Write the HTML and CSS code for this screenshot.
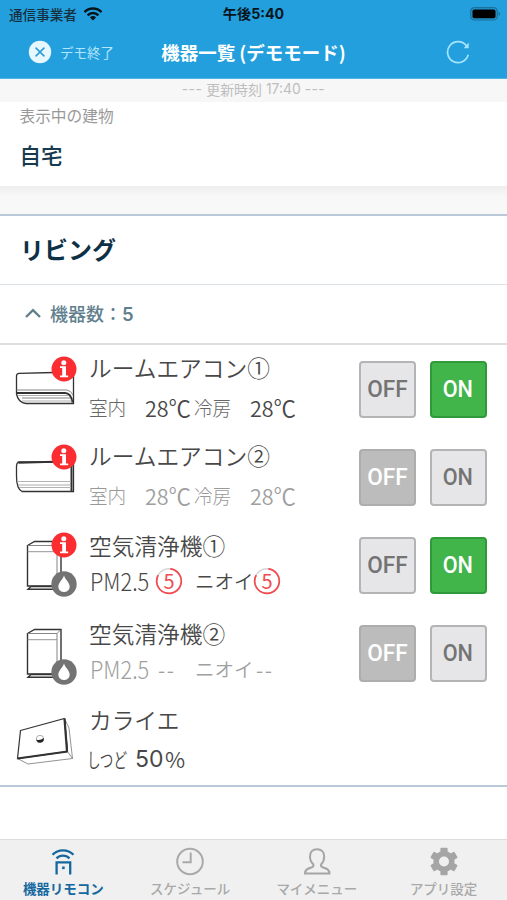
FILE: index.html
```html
<!DOCTYPE html>
<html lang="ja">
<head>
<meta charset="utf-8">
<meta name="viewport" content="width=device-width, initial-scale=1">
<title>機器一覧</title>
<link rel="stylesheet" href="styles.css">
</head>
<body>
<svg class="defs" width="0" height="0" aria-hidden="true">
  <defs>
    <symbol id="info" viewBox="0 0 26 26">
      <circle cx="13" cy="13" r="12.500" fill="#fb2d30"/>
      <circle cx="12.800" cy="6.800" r="2.500" fill="#fff"/>
      <path d="M9 10.200h6v9.200h2.200v1.900H9v-1.900h2.200v-7.300H9z" fill="#fff"/>
    </symbol>
    <symbol id="drop" viewBox="0 0 26 26">
      <circle cx="13" cy="13" r="12.700" fill="#737373"/>
      <path d="M13 4.500c1.200 4 5.700 7.200 5.700 11.300a5.700 5.300 0 0 1-11.400 0C7.300 11.700 11.800 8.500 13 4.500z" fill="#fff"/>
    </symbol>
    <symbol id="purifier" viewBox="0 0 38 52">
      <g fill="none" stroke="#333" stroke-width="1.400">
        <path d="M1.500 5.500L8.500 1.500H35V43L31 46H1.500z"/>
        <path d="M1.500 5.500H31L35 1.500M31 5.500V46" stroke="#777" stroke-width=".9"/>
        <path d="M1.500 11.700H31" stroke="#888" stroke-width=".9"/>
        <path d="M5 46.500L2 49.300H28M5 46.500H28"/>
      </g>
    </symbol>
    <symbol id="ring" viewBox="0 0 28 28">
      <circle cx="14" cy="14" r="12.300" fill="none" stroke="#d4d4d4" stroke-width="1.500"/>
      <path d="M15.300 1.800A12.300 12.300 0 1 1 3.200 8.100" fill="none" stroke="#f4484d" stroke-width="1.700"/>
    </symbol>
  </defs>
</svg>

<div class="screen">
  <header class="header">
    <div class="status">
      <div class="carrier">
        <span>通信事業者</span>
        <svg width="20" height="14" viewBox="0 0 20 14">
          <g fill="none" stroke="#06141c" stroke-width="2.500">
            <path d="M1.500 5.100a12 12 0 0 1 17 0"/>
            <path d="M4.600 8.300a7.600 7.600 0 0 1 10.800 0"/>
          </g>
          <path d="M10 13.500L6.900 10.400a4.400 4.400 0 0 1 6.200 0z" fill="#06141c"/>
        </svg>
      </div>
      <div class="clock">午後5:40</div>
      <svg class="battery" width="31" height="14" viewBox="0 0 31 14">
        <rect x=".7" y=".7" width="26.600" height="12.300" rx="3.600" fill="#2395cc" stroke="#19719d" stroke-width="1.200"/>
        <rect x="2.500" y="2.500" width="23" height="8.700" rx="1.800"/>
        <path d="M28.600 4.700q3 2.200 0 4.400z" fill="#19719d"/>
      </svg>
    </div>
    <div class="nav">
      <div class="exit">
        <svg width="24" height="24" viewBox="0 0 24 24">
          <circle cx="12" cy="12" r="11.200" fill="#e6f7ff"/>
          <path d="M7.600 7.600l8.800 8.800M16.400 7.600l-8.800 8.800" stroke="#2a9bd5" stroke-width="1.500"/>
        </svg>
        <span>デモ終了</span>
      </div>
      <h1>機器一覧 (デモモード)</h1>
      <svg class="reload" width="24" height="24" viewBox="0 0 24 24">
        <path d="M22.200 14.800A10.500 10.500 0 1 1 20.300 5.600" fill="none" stroke="#a6e4ff" stroke-width="1.700"/>
        <path d="M17.700 8.200H22.700V2.500z" fill="#a6e4ff"/>
      </svg>
    </div>
  </header>

  <div class="updated"><span class="dashes">---</span><span>更新時刻</span><b>17:40</b><span class="dashes">---</span></div>

  <section class="building">
    <div class="building-label">表示中の建物</div>
    <div class="building-name">自宅</div>
  </section>
  <div class="gap"></div>

  <section class="room">
    <h2>リビング</h2>
    <div class="count">
      <svg width="16" height="10" viewBox="0 0 16 10"><path d="M1 9l7-6.800L15 9" fill="none" stroke="#627f8e" stroke-width="2.400"/></svg>
      <span>機器数：<b>5</b></span>
    </div>

    <div class="device">
      <div class="pic">
        <svg width="64" height="54" viewBox="0 0 64 54">
          <g fill="none" stroke="#333" stroke-width="1.300">
            <path d="M59.500 14V47.500H12C7 47 3.500 43 2.500 38V20Q2.500 17.500 5 17.300L40 16.500"/>
            <path d="M2.500 37H51Q57 37 58.500 46.500" stroke-width="1.800"/>
            <path d="M2.500 34H53Q57 34.500 59 39" stroke="#777" stroke-width=".9"/>
            <path d="M4 39.500H54M8 45H58" stroke="#999" stroke-width=".8"/>
            <path d="M8 42H57" stroke="#666" stroke-width=".8"/>
          </g>
        </svg>
        <svg class="badge" width="26" height="26"><use href="#info"/></svg>
      </div>
      <div class="text">
        <div class="name">ルームエアコン①</div>
        <div class="stat temp"><span class="k">室内</span><span class="v">28<em>℃</em></span><span class="k">冷房</span><span class="v">28<em>℃</em></span></div>
      </div>
      <div class="buttons"><button class="btn"><span class="w-off">OFF</span></button><button class="btn on"><span class="w-on">ON</span></button></div>
    </div>

    <div class="device">
      <div class="pic">
        <svg width="64" height="54" viewBox="0 0 64 54">
          <g fill="none" stroke="#333" stroke-width="1.300">
            <path d="M59.500 16V47.500H8Q2.500 45 2.500 32V22Q3 18 5 18H57"/>
            <path d="M4.500 18.800L40 17.700M57.500 18V47" stroke-width="2"/>
            <path d="M3 37.500H57M5 43.500H57" stroke="#aaa" stroke-width=".9"/>
            <path d="M4 41H57" stroke="#888" stroke-width=".7"/>
          </g>
        </svg>
        <svg class="badge" width="26" height="26"><use href="#info"/></svg>
      </div>
      <div class="text">
        <div class="name">ルームエアコン②</div>
        <div class="stat temp dim"><span class="k">室内</span><span class="v">28<em>℃</em></span><span class="k">冷房</span><span class="v">28<em>℃</em></span></div>
      </div>
      <div class="buttons"><button class="btn off"><span class="w-off">OFF</span></button><button class="btn"><span class="w-on">ON</span></button></div>
    </div>

    <div class="device">
      <div class="pic air">
        <svg width="38" height="52"><use href="#purifier"/></svg>
        <svg class="badge" width="26" height="26"><use href="#info"/></svg>
        <svg class="badge low" width="26" height="26"><use href="#drop"/></svg>
      </div>
      <div class="text shift">
        <div class="name">空気清浄機①</div>
        <div class="stat quality"><span class="pm"><span>PM2.5</span></span><span class="level"><svg width="28" height="28"><use href="#ring"/></svg><i>5</i></span><span class="odor">ニオイ</span><span class="level"><svg width="28" height="28"><use href="#ring"/></svg><i>5</i></span></div>
      </div>
      <div class="buttons"><button class="btn"><span class="w-off">OFF</span></button><button class="btn on"><span class="w-on">ON</span></button></div>
    </div>

    <div class="device">
      <div class="pic air">
        <svg width="38" height="52"><use href="#purifier"/></svg>
        <svg class="badge low" width="26" height="26"><use href="#drop"/></svg>
      </div>
      <div class="text shift">
        <div class="name">空気清浄機②</div>
        <div class="stat quality dim"><span class="pm"><span>PM2.5</span></span><span class="none">--</span><span class="odor">ニオイ</span><span class="none">--</span></div>
      </div>
      <div class="buttons"><button class="btn off"><span class="w-off">OFF</span></button><button class="btn"><span class="w-on">ON</span></button></div>
    </div>

    <div class="device">
      <div class="pic">
        <svg width="64" height="70" viewBox="0 0 64 70">
          <g fill="none" stroke="#333" stroke-width="1.200">
            <path d="M6.500 32.500L50.500 20.500L53.500 53.500L3.500 60.500z"/>
            <path d="M50.500 20.500L53.500 53.500L58.500 60.500L55 30zM3.500 60.500L14 66L58.500 60.500" stroke="#777" stroke-width=".8"/>
            <path d="M50.500 20.500L53 53.500" stroke-width="2.200"/>
            <path d="M3.500 60.500L53.500 53.500" stroke-width="1.800"/>
            <circle cx="26" cy="41" r="3.700" stroke="#999" stroke-width=".8"/>
          </g>
          <path d="M22.300 41.500Q26 43 29.700 40A3.700 3.700 0 0 1 22.300 41.500z" fill="#222"/>
        </svg>
      </div>
      <div class="text">
        <div class="name">カライエ</div>
        <div class="stat humid"><span class="hk">しつど</span><span class="hv">50</span><span class="hp">%</span></div>
      </div>
    </div>
  </section>

  <nav class="tabs">
    <div class="tab active">
      <svg width="28" height="30" viewBox="0 0 28 30">
        <g fill="none" stroke="#15689f" stroke-width="2.300">
          <path d="M3.500 8.800a14.500 14.500 0 0 1 21 0"/>
          <path d="M7.500 12.400a9 9 0 0 1 13 0"/>
          <path d="M7.600 28.500V16.300h13.600v12.200"/>
        </g>
        <rect x="13.100" y="20.500" width="2.600" height="2.600" fill="#15689f"/>
      </svg>
      <span>機器リモコン</span>
    </div>
    <div class="tab">
      <svg width="28" height="30" viewBox="0 0 28 30">
        <circle cx="14" cy="15.500" r="12.800" fill="none" stroke="#a9a9a9" stroke-width="2"/>
        <path d="M14.700 6.500v9.700H6.500" fill="none" stroke="#a9a9a9" stroke-width="2"/>
      </svg>
      <span>スケジュール</span>
    </div>
    <div class="tab">
      <svg width="28" height="30" viewBox="0 0 28 30">
        <path d="M14 3.200c-4.500 0-7 3-7 7.300 0 3.500 1.300 6 3.300 7.700.6 1.800 0 2.400-1.300 3-3.800 1.300-6.800 2-7 6.300h24.500c-.3-4.300-3.200-5-7-6.300-1.300-.6-1.900-1.200-1.300-3 1.900-1.700 3-4.200 3-7.700 0-4.300-2.700-7.300-7.200-7.300z" fill="none" stroke="#a5a5a5" stroke-width="2"/>
      </svg>
      <span>マイメニュー</span>
    </div>
    <div class="tab">
      <svg width="28" height="30" viewBox="0 0 28 30">
        <g fill="#a5a5a5">
          <rect x="10.400" y="1.700" width="7.200" height="27.600" rx="1"/>
          <rect x="10.400" y="1.700" width="7.200" height="27.600" rx="1" transform="rotate(60 14 15.500)"/>
          <rect x="10.400" y="1.700" width="7.200" height="27.600" rx="1" transform="rotate(120 14 15.500)"/>
          <circle cx="14" cy="15.500" r="10.600"/>
        </g>
        <circle cx="14" cy="15.500" r="5" fill="#f0f0f0"/>
      </svg>
      <span>アプリ設定</span>
    </div>
  </nav>
</div>
</body>
</html>
```
FILE: styles.css
```css
* { box-sizing: border-box; }
body {
  margin: 0;
  background: #fff;
  font-family: "Noto Sans CJK JP", sans-serif;
  color: #555;
}
svg { display: block; flex: none; }
h1, h2 { margin: 0; }
.defs { position: absolute; }
.screen {
  width: 507px;
  height: 900px;
  display: flex;
  flex-direction: column;
  overflow: hidden;
}
span, .name, .clock, h1, h2 { white-space: nowrap; }

.header { height: 79px; background: #229fdc; border-bottom: 1px solid #4fb3e4; }
.status {
  height: 26px;
  display: grid;
  grid-template-columns: 1fr auto 1fr;
  align-items: center;
  padding: 0 6px 0 9px;
  color: #06141c;
}
.carrier { display: flex; align-items: center; gap: 6px; font-size: 13.600px; line-height: 26px; color: #17303f; font-weight: 500; }
.clock { font-size: 14.200px; font-weight: 700; line-height: 27px; margin-right: 3px; font-family: Inter, "Noto Sans CJK JP", sans-serif; }
.battery { justify-self: end; }
.nav {
  height: 52px;
  display: grid;
  grid-template-columns: 1fr auto 1fr;
  align-items: center;
  padding: 0 37px;
}
.exit { display: flex; align-items: center; gap: 8px; margin-left: -9px; color: #b4e5ff; font-size: 13.500px; }
.nav h1 { font-size: 18.500px; line-height: 52px; color: #fff; font-weight: 700; }
.reload { justify-self: end; }

.updated {
  height: 23px;
  display: flex;
  justify-content: center;
  gap: 4px;
  background: #f7f7f7;
  font-size: 13.900px;
  line-height: 20px;
  color: #bdbdbd;
}
.updated b { font-weight: 400; font-family: Inter, sans-serif; }
.dashes { font-family: Inter, sans-serif; font-size: 14px; letter-spacing: .4px; }

.building { height: 84px; padding-left: 19.500px; }
.building-label { font-size: 15.700px; line-height: 28px; color: #999; }
.building-name { font-size: 21.500px; line-height: 50px; font-weight: 500; color: #173a50; }
.gap { height: 28px; background: linear-gradient(#eee, #f8f8f8 40%); }

.room { border-top: 2px solid #b9c9d7; border-bottom: 2px solid #b9c9d7; height: 573px; }
.room h2 { height: 69px; padding-left: 20px; font-size: 24px; line-height: 66px; color: #0d3046; border-bottom: 1px solid #dde2e6; }
.count {
  height: 60px;
  display: flex;
  align-items: center;
  gap: 9px;
  padding: 0 0 2px 25px;
  font-size: 18px;
  font-weight: 500;
  line-height: 54px;
  color: #627f8e;
  border-bottom: 2px solid #dcdfe2;
}
.count b { font-family: Inter, sans-serif; font-weight: 600; font-size: 18.500px; }

.device { height: 88px; display: flex; align-items: flex-start; }
.pic { position: relative; width: 75px; height: 80px; margin: 11px 0 0 14px; flex: none; }
.device:last-child .pic { margin-top: 1px; }
.pic.air { padding: 8px 0 0 12px; }
.badge { position: absolute; left: 37px; top: 0; }
.badge.low { top: 39px; }

.text { flex: 1; display: flex; flex-direction: column; }
.name { height: 46px; font-size: 22.700px; line-height: 46px; font-weight: 350; color: #484848; }
.stat { display: flex; align-items: center; height: 32px; font-weight: 350; color: #484848; }
.stat > span { flex: none; }
.stat.dim { color: #a0a0a0; }
.temp .k { width: 56px; font-size: 20px; font-weight: 300; color: #666; transform: scaleX(.93); transform-origin: left; }
.temp .v { width: 49px; font-size: 21.500px; }
.temp em { font-style: normal; font-size: 22.500px; }
.temp.dim .k { color: #999; }
.shift .name { height: 48px; line-height: 50px; }
.shift .stat { height: 24px; line-height: 24px; }
.pm { width: 66px; padding-left: 1px; font-size: 24.500px; font-weight: 300; }
.pm span { display: inline-block; transform: scaleX(.89); transform-origin: left; }
.odor { width: 70px; padding-left: 12px; font-size: 19.500px; }
.level { position: relative; width: 28px; height: 28px; }
.level i { position: absolute; inset: 0; text-align: center; font-style: normal; font-size: 20px; line-height: 27px; font-weight: 400; color: #f04b50; }
.none { width: 28px; padding-left: 3px; font-size: 21px; letter-spacing: 1.500px; }
.hk { width: 48px; font-size: 20px; transform: scaleX(.68); transform-origin: left; margin-left: -2px; }
.hv { font: 400 23px/32px Inter, sans-serif; width: 30px; }
.hp { font-size: 22px; transform: translateY(-1px); }

.buttons { display: flex; gap: 14px; padding: 16px 20.500px 0 0; }
.btn {
  width: 57px;
  height: 57px;
  padding: 0;
  border: 2px solid #b4b4b6;
  border-radius: 4px;
  background: #e6e6e8;
  color: #747474;
  font: 500 24px/53px Roboto, sans-serif;
}
.btn span { display: inline-block; }
.w-off { transform: scaleX(.94); }
.w-on { transform: scaleX(.9); }
.btn.on { background: #41b54a; border-color: #2f9a3b; color: #fff; }
.btn.off { background: #bcbcbc; border-color: #adadad; color: #fff; }

.tabs {
  margin-top: auto;
  height: 61px;
  display: grid;
  grid-template-columns: repeat(4, 1fr);
  background: #f0f0f0;
  border-top: 1px solid #dcdcdc;
}
.tab { display: flex; flex-direction: column; align-items: center; padding-top: 6px; font-size: 13.500px; font-weight: 500; line-height: 25px; color: #a9a9a9; }
.tab.active { color: #15689f; font-weight: 700; }
```
